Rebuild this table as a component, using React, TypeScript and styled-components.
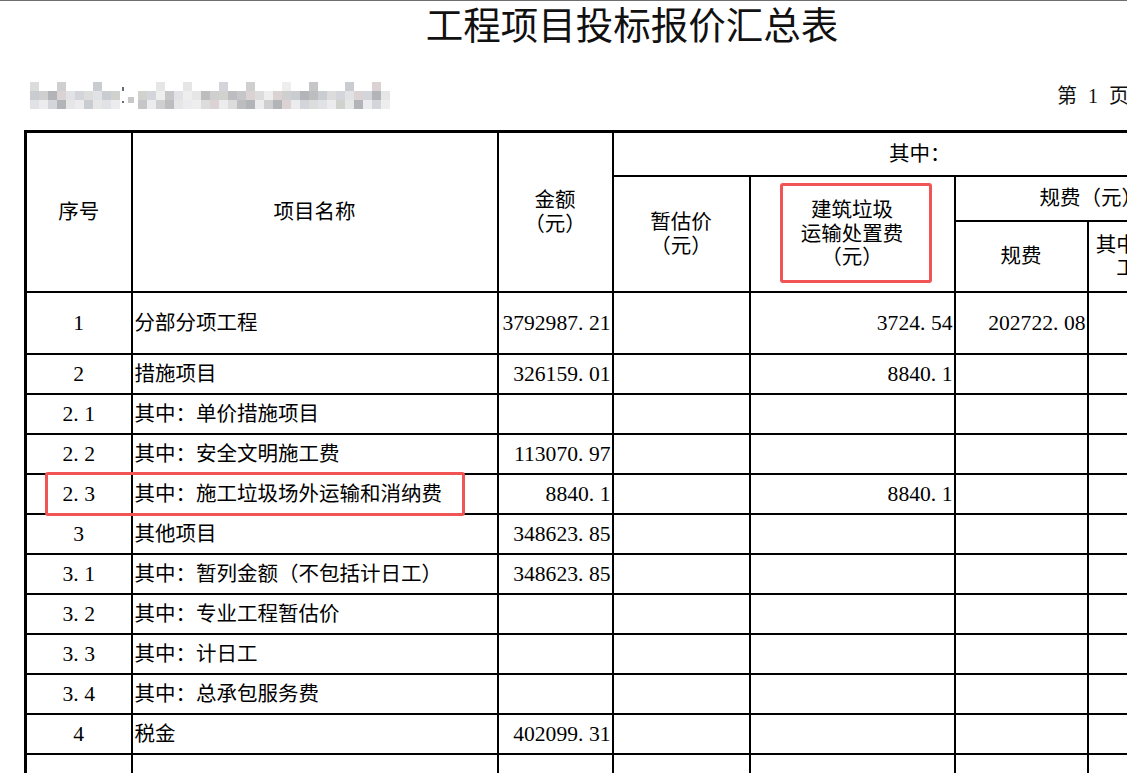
import React from 'react';
import styled, { createGlobalStyle } from 'styled-components';

const GlobalStyle = createGlobalStyle`
  html, body { margin: 0; padding: 0; background: #fff; overflow: hidden; }
  body { font-family: "Liberation Serif", "Noto Sans CJK SC", serif; color: #000; }
`;

const Viewport = styled.div`
  width: 1127px;
  height: 773px;
  overflow: hidden;
  border-top: 1px solid #6e6e6e;
  box-sizing: border-box;
`;

const Page = styled.div`
  width: 1260px;
  padding-left: 24px;
  box-sizing: border-box;
`;

const Title = styled.h1`
  margin: 0;
  width: 1203px;
  padding-left: 13px;
  box-sizing: border-box;
  text-align: center;
  font-family: "Noto Sans CJK SC", sans-serif;
  font-weight: 400;
  font-size: 37.5px;
  line-height: 44px;
  color: #111;
`;

const InfoRow = styled.div`
  width: 1203px;
  height: 30px;
  margin-top: 36px;
  display: flex;
  align-items: center;
  justify-content: space-between;
`;

const PageNo = styled.div`
  width: 170px;
  font-size: 20px;
  line-height: 30px;
  word-spacing: 6px;
  white-space: pre;
  color: #111;
`;

const Sheet = styled.table`
  margin-top: 19px;
  border-collapse: collapse;
  table-layout: fixed;
  width: 1202px;
  border: 3px solid #000;
`;

const Row = styled.tr<{ $h: number }>`
  height: ${(p) => p.$h}px;
`;

const Head = styled.th`
  border: 2px solid #000;
  padding: 2px 0 0;
  font-weight: 400;
  font-size: 20.5px;
  line-height: 23.5px;
  text-align: center;
  vertical-align: middle;
  white-space: pre;
  position: relative;
`;

const Cell = styled.td<{ $align: 'left' | 'center' | 'right'; $num?: boolean }>`
  border: 2px solid #000;
  padding: 1px ${(p) => (p.$align === 'right' ? '1px' : '2px')} 0;
  font-size: ${(p) => (p.$num ? '21.6px' : '20.5px')};
  line-height: 24px;
  text-align: ${(p) => p.$align};
  vertical-align: middle;
  white-space: nowrap;
  position: relative;
`;

const Dot = styled.span`
  padding-right: 5.5px;
`;

const Highlight = styled.div`
  position: absolute;
  box-sizing: border-box;
  border: 3px solid #f05454;
  border-radius: 3px;
  pointer-events: none;
`;

const HeaderMark = styled(Highlight)`
  top: 6px;
  bottom: 8px;
  left: 29px;
  right: 22px;
`;

const RowMark = styled(Highlight)`
  top: -3px;
  left: 18px;
  width: 420px;
  height: 44px;
`;

function Num({ v }: { v?: string }) {
  if (!v) return null;
  const [a, b] = v.split('.');
  return (
    <>
      {a}
      {b !== undefined && (
        <>
          <Dot>.</Dot>
          {b}
        </>
      )}
    </>
  );
}

const shades = ['#dcdcdc', '#cfcfcf', '#c6c6c8', '#e6e6e6', '#d3d5da', '#c9cdd1', '#dbd3d3', '#bdbdbf', '#eeeeee', '#d0d3cd', '#e1e2e6', '#b3b4b8'];

function Mosaic() {
  const blocks: { x: number; y: number; c: string }[] = [];
  const groups = [
    { from: 0, to: 10 },
    { from: 12, to: 40 },
  ];
  groups.forEach((g) => {
    for (let i = g.from; i < g.to; i++) {
      for (let r = 0; r < 3; r++) {
        if (r === 0 && (i * 5) % 7 > 1) continue;
        const idx = (i * 7 + r * 5 + ((i * i) % 5)) % shades.length;
        blocks.push({ x: i * 9, y: r * 9, c: r === 2 && i % 4 === 1 ? '#ececee' : shades[idx] });
      }
    }
  });
  return (
    <svg width="372" height="28" viewBox="0 0 372 28" style={{ marginLeft: 6 }}>
      {blocks.map((b, k) => (
        <rect key={k} x={b.x} y={b.y} width="9" height="9" fill={b.c} />
      ))}
      <rect x="92" y="5" width="2" height="4" fill="#6a6a78" />
      <rect x="92" y="19" width="2" height="2" fill="#6a6a78" />
      <rect x="98" y="15" width="6" height="6" fill="#c8c8c8" />
    </svg>
  );
}

type Item = { no?: string; name?: string; amt?: string; waste?: string; fee?: string; h?: number; mark?: boolean };

const rows: Item[] = [
  { no: '1', name: '分部分项工程', amt: '3792987.21', waste: '3724.54', fee: '202722.08', h: 62 },
  { no: '2', name: '措施项目', amt: '326159.01', waste: '8840.1' },
  { no: '2.1', name: '其中：单价措施项目' },
  { no: '2.2', name: '其中：安全文明施工费', amt: '113070.97' },
  { no: '2.3', name: '其中：施工垃圾场外运输和消纳费', amt: '8840.1', waste: '8840.1', mark: true },
  { no: '3', name: '其他项目', amt: '348623.85' },
  { no: '3.1', name: '其中：暂列金额（不包括计日工）', amt: '348623.85' },
  { no: '3.2', name: '其中：专业工程暂估价' },
  { no: '3.3', name: '其中：计日工' },
  { no: '3.4', name: '其中：总承包服务费' },
  { no: '4', name: '税金', amt: '402099.31' },
  {},
  {},
];

const widths = [106, 366, 115, 137, 205, 133, 140];

export default function App() {
  return (
    <>
      <GlobalStyle />
      <Viewport>
        <Page>
          <Title>工程项目投标报价汇总表</Title>
          <InfoRow>
            <Mosaic />
            <PageNo>第 1 页  共 1 页</PageNo>
          </InfoRow>
          <Sheet>
            <colgroup>
              {widths.map((w, i) => (
                <col key={i} style={{ width: w }} />
              ))}
            </colgroup>
            <thead>
              <Row $h={44}>
                <Head rowSpan={3}>序号</Head>
                <Head rowSpan={3}>项目名称</Head>
                <Head rowSpan={3}>{'金额\n（元）'}</Head>
                <Head colSpan={4}>其中：</Head>
              </Row>
              <Row $h={45}>
                <Head rowSpan={2}>{'暂估价\n（元）'}</Head>
                <Head rowSpan={2}>
                  {'建筑垃圾\n运输处置费\n（元）'}
                  <HeaderMark />
                </Head>
                <Head colSpan={2}>规费（元）</Head>
              </Row>
              <Row $h={71}>
                <Head>规费</Head>
                <Head>{'其中：社保费\n工程排污'}</Head>
              </Row>
            </thead>
            <tbody>
              {rows.map((r, i) => (
                <Row key={i} $h={r.h ?? 40}>
                  <Cell $align="center" $num>
                    <Num v={r.no} />
                    {r.mark && <RowMark />}
                  </Cell>
                  <Cell $align="left">{r.name}</Cell>
                  <Cell $align="right" $num>
                    <Num v={r.amt} />
                  </Cell>
                  <Cell $align="right" $num />
                  <Cell $align="right" $num>
                    <Num v={r.waste} />
                  </Cell>
                  <Cell $align="right" $num>
                    <Num v={r.fee} />
                  </Cell>
                  <Cell $align="right" $num />
                </Row>
              ))}
            </tbody>
          </Sheet>
        </Page>
      </Viewport>
    </>
  );
}
